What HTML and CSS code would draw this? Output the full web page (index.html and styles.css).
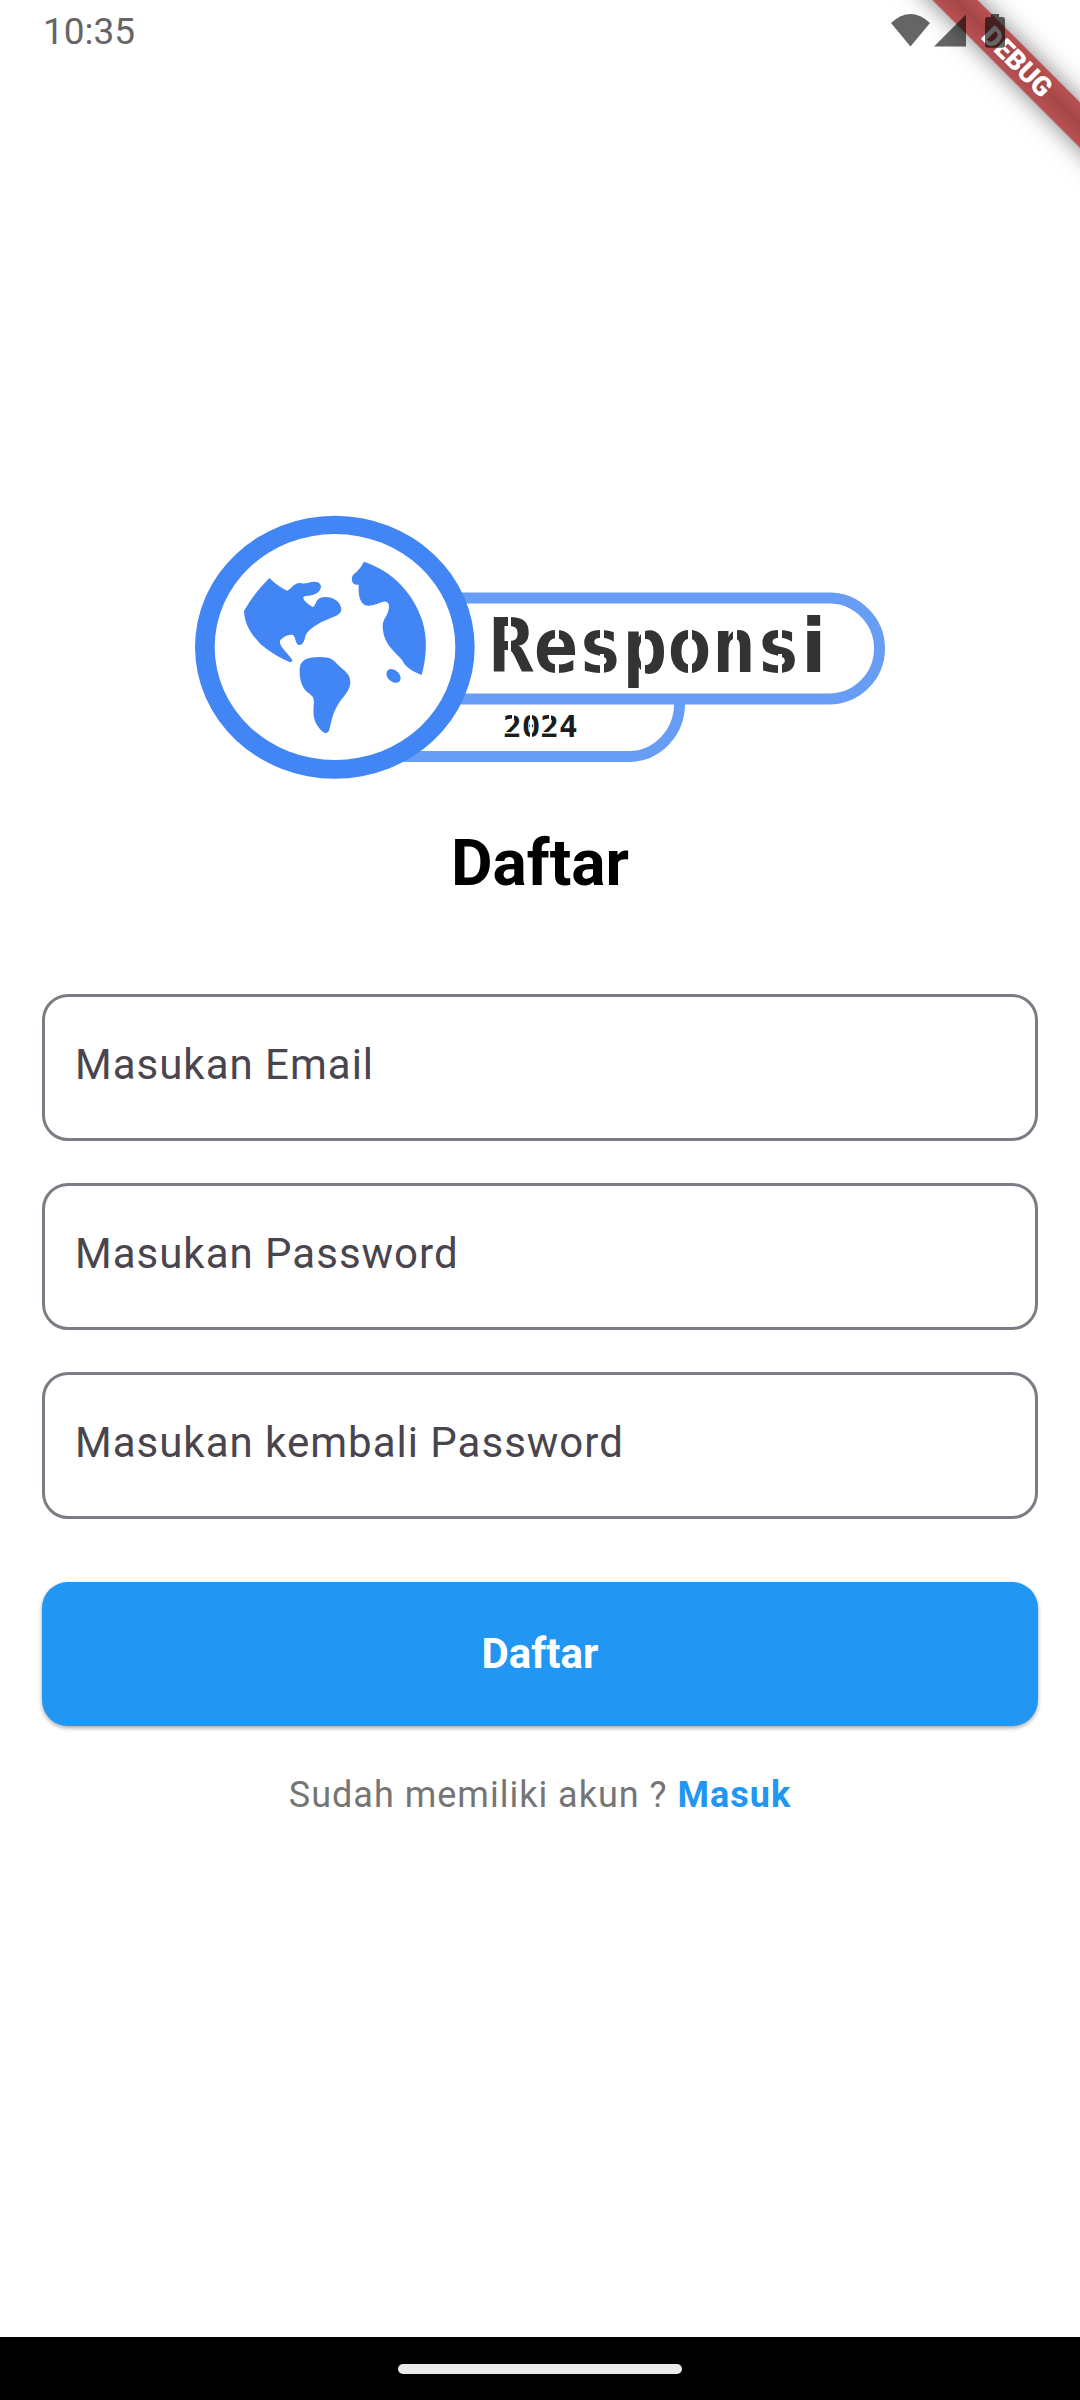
FILE: index.html
```html
<!DOCTYPE html>
<html lang="id">
<head>
<meta charset="utf-8">
<meta name="viewport" content="width=device-width, initial-scale=1">
<title>Daftar</title>
<link rel="stylesheet" href="styles.css">
</head>
<body>
<div class="screen">
  <div class="ribbon">DEBUG</div>
  <header class="status-bar">
    <time class="clock">10:35</time>
    <svg class="status-icons" width="114" height="34" viewBox="0 0 114 34" aria-hidden="true">
      <path d="M0 9Q19.500 -9 39 9L19.500 32.500Z"/>
      <path d="M43 32.500H75V0.500Z"/>
      <path d="M100 0h8v3h3.500q2.500 0 2.500 2.500V31q0 2.700-2.500 2.700h-15Q94 33.700 94 31V5.500Q94 3 96.500 3H100Z"/>
    </svg>
  </header>

  <main class="content">
    <svg class="logo" viewBox="195 515 690 265" role="img" aria-label="Responsi 2024">
      <g fill="none" stroke="#689df6" stroke-width="11">
        <path d="M440 598H829A50.500 50.500 0 0 1 829 699H440"/>
        <path d="M679.500 704A51 52.500 0 0 1 629 756.500H380"/>
      </g>
      <g transform="translate(180 500) scale(.33333)" fill="#4285f4">
        <ellipse cx="464.500" cy="441.500" rx="419.500" ry="394.500"/>
        <ellipse cx="465" cy="441" rx="361" ry="339" fill="#fff"/>
        <path d="M268 234Q292 258 321 272C334 268 338 250 360 249C378 254 388 244 405 245C420 246 425 256 422 265C416 282 400 286 378 288C368 289 368 296 374 302Q386 315 398 321C408 318 405 300 422 293C448 286 484 300 484 330C482 346 460 350 430 364C410 374 378 392 375 413C372 430 362 436 357 435C345 432 348 412 339 405C325 402 308 412 300 422C296 436 318 455 335 477Q340 487 329 486Q285 469 242 433C214 403 194 375 192 333Q220 282 268 234Z"/>
        <path d="M392 473Q420 469 445 473C462 478 470 492 487 506C502 518 511 528 511 547C511 575 484 592 468 625C453 655 454 672 447 692Q440 703 429 696C410 680 402 660 401 645C399 625 404 605 400 594C394 582 380 580 370 562C358 540 359 520 359 507C360 486 373 476 392 473Z"/>
        <path d="M552 185C640 215 700 280 727 362C743 415 740 470 725 525C700 516 684 505 673 492C667 477 652 466 637 449C617 428 608 402 608 378C608 355 628 345 627 315C621 296 605 307 590 312C567 320 552 319 544 305C534 288 536 265 536 254Q521 257 516 243Q512 226 529 217Q544 202 552 185Z"/>
        <path d="M628 508C640 504 662 518 662 535C661 550 646 552 634 544C618 535 614 514 628 508Z"/>
      </g>
      <text class="logo-name" x="489" y="672">Respons<tspan class="logo-narrow">i</tspan></text>
      <text class="logo-year" x="503" y="737">2024</text>
      <g fill="#fff">
        <path d="M508 612h3v64h-3z"/>
        <path d="M555 622h4v21h-4zM555 657h4v20h-4zM600 622h4v19h-4zM600 654h4v22h-4zM641 624h4v54h-4zM688 622h4v56h-4zM733 622h4v19h-4zM778 622h4v19h-4zM778 654h4v22h-4z"/>
        <path d="M512 713h2v9h-2zM530 713h2v26h-2zM549 713h2v9h-2zM504 732h15v1.500h-15zM541 732h15v1.500h-15z"/>
      </g>
    </svg>

    <h1 class="title">Daftar</h1>

    <form class="form">
      <div class="fields">
        <div class="field">
          <input class="field-input" id="email" type="email">
          <label class="field-label" for="email">Masukan Email</label>
        </div>
        <div class="field">
          <input class="field-input" id="password" type="password">
          <label class="field-label" for="password">Masukan Password</label>
        </div>
        <div class="field">
          <input class="field-input" id="confirm" type="password">
          <label class="field-label" for="confirm">Masukan kembali Password</label>
        </div>
      </div>
      <button class="submit" type="submit">Daftar</button>
    </form>

    <p class="signin">Sudah memiliki akun ? <a class="signin-link" href="#masuk">Masuk</a></p>
  </main>

  <footer class="nav-bar"><span class="nav-handle"></span></footer>
</div>
</body>
</html>
```
FILE: styles.css
```css
* {
  box-sizing: border-box;
}

body {
  margin: 0;
  background: #fff;
  color: #000;
  font-family: Roboto, "Liberation Sans", sans-serif;
}

.screen {
  position: relative;
  display: flex;
  flex-direction: column;
  min-height: 100vh;
  overflow: hidden;
}

/* Corner ribbon, drawn under the status icons */
.ribbon {
  position: absolute;
  top: 46px;
  right: -87px;
  width: 300px;
  height: 32px;
  transform: rotate(45deg);
  background: linear-gradient(#b95252, #a64747 50%, #b95252);
  box-shadow: 0 0 24px rgba(0, 0, 0, 0.5);
  color: #fff;
  font-size: 27px;
  font-weight: 900;
  line-height: 32px;
  text-align: center;
}

.status-bar {
  position: relative;
  display: flex;
  justify-content: space-between;
  align-items: flex-start;
  height: 63px;
  padding: 14px 75px 0 43px;
}

.clock {
  color: #666;
  font-size: 37px;
  line-height: 36px;
}

.status-icons {
  fill: #000;
  opacity: 0.6;
}

.content {
  flex: 1;
  display: flex;
  flex-direction: column;
  align-items: center;
  justify-content: center;
  padding: 0 42px 69px;
}

.logo {
  width: 690px;
  max-width: 100%;
}

.logo-name {
  fill: #333;
  font: bold 74px "DejaVu Sans Mono", monospace;
}

.logo-narrow {
  font-family: "DejaVu Sans", sans-serif;
}

.logo-year {
  fill: #1c1c1c;
  font: bold 31px "DejaVu Sans Mono", monospace;
}

.title {
  margin: 47px 0 93px;
  font-size: 64px;
  font-weight: 700;
  line-height: 74px;
}

.form {
  display: flex;
  flex-direction: column;
  gap: 63px;
  width: 100%;
}

.fields {
  display: flex;
  flex-direction: column;
  gap: 42px;
}

.field {
  display: grid;
}

.field-input,
.field-label {
  grid-area: 1 / 1;
  font-size: 42px;
  letter-spacing: 1px;
}

.field-input {
  width: 100%;
  height: 147px;
  padding: 0 32px;
  border: 3px solid #7f7a84;
  border-radius: 26px;
  background: transparent;
  font-family: inherit;
}

.field-label {
  align-self: center;
  padding: 0 33px 4px;
  color: #49454f;
  line-height: 56px;
  pointer-events: none;
}

.submit {
  height: 144px;
  padding: 0;
  border: 0;
  border-radius: 26px;
  background: #2196f3;
  box-shadow: 0 2px 4px rgba(0, 0, 0, 0.35);
  color: #fff;
  font-family: inherit;
  font-size: 42px;
  font-weight: 700;
}

.signin {
  margin: 48px 0 0;
  color: #757575;
  font-size: 36px;
  line-height: 43px;
  letter-spacing: 1px;
}

.signin-link {
  color: #2196f3;
  font-weight: 700;
  text-decoration: none;
}

.nav-bar {
  display: flex;
  align-items: center;
  justify-content: center;
  height: 63px;
  background: #000;
}

.nav-handle {
  width: 284px;
  height: 10px;
  border-radius: 5px;
  background: #ebebeb;
}
```
